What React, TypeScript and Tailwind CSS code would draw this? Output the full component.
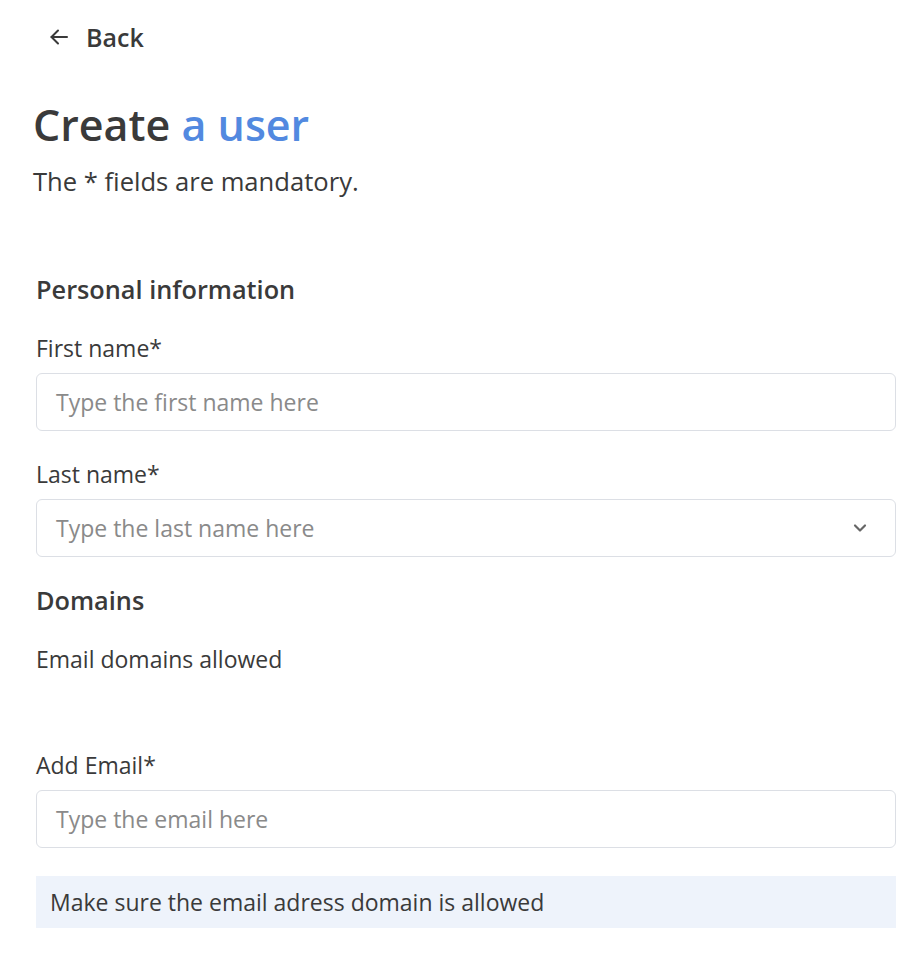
import React from "react";

export default function App() {
  const font = { fontFamily: "'Open Sans', Lato, sans-serif" };
  return (
    <div className="min-h-screen bg-white text-[#3a3a3a]" style={font}>
      <div className="pl-[36px] pr-[18px]">
        <div className="pt-[22px] flex items-center h-[52px] box-border">
          <button className="flex items-center gap-[18px] pl-[14px] text-[25px] leading-[30px] font-semibold text-[#3a3a3a]">
            <svg width="18" height="16" viewBox="0 0 18 16" fill="none" stroke="#3a3a3a" strokeWidth="2" strokeLinecap="round" strokeLinejoin="round">
              <path d="M17 8H1.5" />
              <path d="M8 1.5L1.5 8L8 14.5" />
            </svg>
            Back
          </button>
        </div>
        <h1 className="mt-[47px] text-[43px] leading-[52px] font-semibold -ml-[3px]">
          Create <span className="text-[#5289e0]">a user</span>
        </h1>
        <p className="mt-[15px] text-[25.6px] leading-[32px] -ml-[3px]">The * fields are mandatory.</p>

        <h2 className="mt-[75px] text-[25.3px] leading-[32px] font-semibold">Personal information</h2>
        <label className="block mt-[29px] text-[23px] leading-[28px]">First name*</label>
        <div className="mt-[11px] h-[58px] rounded-[6px] border border-[#dcdfe5] flex items-center px-[19px]">
          <span className="text-[23px] text-[#8a8a8a]">Type the first name here</span>
        </div>
        <label className="block mt-[29px] text-[23px] leading-[28px]">Last name*</label>
        <div className="mt-[11px] h-[58px] rounded-[6px] border border-[#dcdfe5] flex items-center justify-between pl-[19px] pr-[25px]">
          <span className="text-[23px] text-[#8a8a8a]">Type the last name here</span>
          <svg width="20" height="20" viewBox="0 0 24 24" fill="none" stroke="#666" strokeWidth="2.6" strokeLinecap="round" strokeLinejoin="round">
            <path d="M6 9l6 6 6-6" />
          </svg>
        </div>

        <h2 className="mt-[27px] text-[25.3px] leading-[32px] font-semibold">Domains</h2>
        <p className="mt-[29px] text-[23px] leading-[28px]">Email domains allowed</p>

        <label className="block mt-[78px] text-[23px] leading-[28px]">Add Email*</label>
        <div className="mt-[11px] h-[58px] rounded-[6px] border border-[#dcdfe5] flex items-center px-[19px]">
          <span className="text-[23px] text-[#8a8a8a]">Type the email here</span>
        </div>
        <div className="mt-[28px] h-[52px] bg-[#eef3fb] flex items-center px-[14px]">
          <span className="text-[23px]">Make sure the email adress domain is allowed</span>
        </div>
      </div>
    </div>
  );
}
